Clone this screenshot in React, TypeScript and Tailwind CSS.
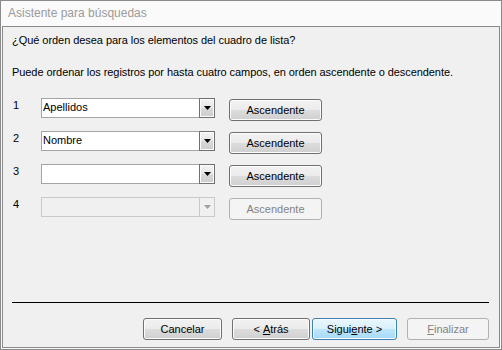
import React from 'react';

const font = "font-['Liberation_Sans',Arial,sans-serif]";

const winBtn =
  'h-[22px] rounded-[3px] border border-[#707070] bg-[linear-gradient(#f2f2f2,#ebebeb_50%,#dddddd_50%,#cfcfcf)] shadow-[inset_0_0_0_1px_#fcfcfc] text-[11px] text-black flex items-center justify-center';
const winBtnBlue =
  'h-[22px] rounded-[3px] border border-[#3c7fb1] bg-[linear-gradient(#eaf6fd,#d9f0fc_50%,#bee6fd_50%,#a7d9f5)] shadow-[inset_0_0_0_1px_#fcfcfc] text-[11px] text-black flex items-center justify-center';
const winBtnOff =
  'h-[22px] rounded-[3px] border border-[#adb2b5] bg-[#f4f4f4] text-[11px] text-[#838383] flex items-center justify-center';

function Arrow({ disabled }: { disabled?: boolean }) {
  return (
    <svg width="7" height="4" viewBox="0 0 7 4">
      <polygon points="0,0 7,0 3.5,4" fill={disabled ? '#a0a0a0' : '#000'} />
    </svg>
  );
}

function Combo({ value, disabled }: { value?: string; disabled?: boolean }) {
  return (
    <div
      className={
        'w-[174px] h-[20px] flex border-y border-l ' +
        (disabled ? 'bg-[#f0f0f0] border-[#c9c9c9]' : 'bg-white border-[#a5a5a5]')
      }
    >
      <div className="flex-1 pl-[1px] text-[11px] leading-[17px] text-black">{value}</div>
      <div
        className={
          'w-[16px] -my-[1px] flex items-center justify-center border ' +
          (disabled
            ? 'border-[#c9c9c9] bg-[#f0f0f0]'
            : 'border-[#707070] bg-[linear-gradient(#f4f4f4,#e6e6e6_50%,#d9d9d9_50%,#cdcdcd)] shadow-[inset_0_0_0_1px_#fcfcfc]')
        }
      >
        <Arrow disabled={disabled} />
      </div>
    </div>
  );
}

const rows = [
  { n: '1', value: 'Apellidos' },
  { n: '2', value: 'Nombre' },
  { n: '3', value: '' },
  { n: '4', value: '', disabled: true },
];

export default function App() {
  return (
    <div className={`w-[502px] h-[350px] border border-[#8a8a8a] bg-[#fafafa] flex flex-col ${font}`}>
      <div className="h-[25px] pl-[7px] pt-[5px] text-[12px] leading-[15px] text-[#9b9b9b]">
        Asistente para búsquedas
      </div>
      <div className="flex-1 mx-[1px] mb-[1px] border border-[#8a8a8a] bg-[#f0f0f0] flex flex-col pl-[9px] pr-[10px] pb-[7px]">
        <p className="mt-[7px] text-[11px] leading-[13px] text-black tracking-[-0.05px]">
          ¿Qué orden desea para los elementos del cuadro de lista?
        </p>
        <p className="mt-[19px] text-[11px] leading-[13px] text-black tracking-[-0.07px]">
          Puede ordenar los registros por hasta cuatro campos, en orden ascendente o descendente.
        </p>

        <div className="mt-[19px] flex flex-col gap-[11px]">
          {rows.map((r) => (
            <div key={r.n} className="h-[22px] flex items-start">
              <span className="w-[29px] pl-[1px] text-[11px] leading-[13px] text-black pt-[1px]">{r.n}</span>
              <Combo value={r.value} disabled={r.disabled} />
              <div className="ml-[14px] mt-[1px]">
                <div className={`w-[93px] ${r.disabled ? winBtnOff : winBtn}`}>Ascendente</div>
              </div>
            </div>
          ))}
        </div>

        <div className="flex-1" />
        <div className="h-px bg-black" />
        <div className="mt-[15px] flex justify-end">
          <div className={`w-[79px] ${winBtn}`}>Cancelar</div>
          <div className={`ml-[10px] w-[78px] ${winBtn}`}>
            &lt;&nbsp;<span className="underline">A</span>trás
          </div>
          <div className={`ml-[2px] w-[85px] ${winBtnBlue}`}>
            Sigui<span className="underline">e</span>nte &gt;
          </div>
          <div className={`ml-[10px] w-[82px] ${winBtnOff}`}>
            <span className="underline">F</span>inalizar
          </div>
        </div>
      </div>
    </div>
  );
}
